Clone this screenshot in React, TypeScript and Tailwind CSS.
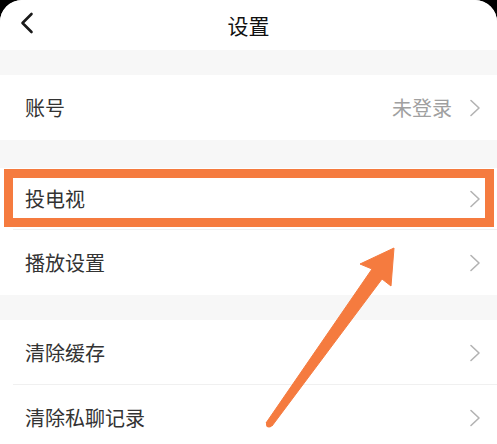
import React from "react";

const font = { fontFamily: '"Noto Sans CJK SC", "Noto Sans", sans-serif' };

function Chevron() {
  return (
    <svg width="12" height="18" viewBox="0 0 12 18" className="shrink-0">
      <polyline
        points="2,1.5 10,9 2,16.5"
        fill="none"
        stroke="#b3b3b3"
        strokeWidth="1.6"
        strokeLinecap="round"
        strokeLinejoin="round"
      />
    </svg>
  );
}

function Row({
  label,
  value,
  divider,
  short,
}: {
  label: string;
  value?: string;
  divider?: boolean;
  short?: boolean;
}) {
  return (
    <div
      className={
        "relative bg-white flex items-center pl-[25px] pr-[16px] " +
        (short ? "h-[62px]" : "h-[65px]")
      }
    >
      <span className="text-[20px] text-[#333333] flex-1 leading-none">{label}</span>
      {value && (
        <span className="text-[20px] text-[#a0a0a0] leading-none mr-[17px]">{value}</span>
      )}
      <Chevron />
      {divider && (
        <div className="absolute left-[13px] right-0 bottom-0 h-px bg-[#f0f0f0]" />
      )}
    </div>
  );
}

export default function App() {
  return (
    <div className="w-[497px] h-[444px] bg-black overflow-hidden relative" style={font}>
      <div className="h-full bg-[#f7f7f7] rounded-t-[22px] overflow-hidden">
        {/* header */}
        <div className="h-[50px] bg-white relative flex items-center justify-center">
          <svg width="14" height="22" viewBox="0 0 14 22" className="absolute left-[20px] top-[12px]">
            <polyline
              points="11.5,2 2.5,11 11.5,20"
              fill="none"
              stroke="#1a1a1a"
              strokeWidth="2.6"
              strokeLinecap="round"
              strokeLinejoin="round"
            />
          </svg>
          <span className="text-[21px] text-[#111111] leading-none">设置</span>
        </div>

        <div className="h-[25px]" />
        <Row label="账号" value="未登录" />

        <div className="h-[28px]" />
        <Row label="投电视" divider short />
        <Row label="播放设置" />

        <div className="h-[25px]" />
        <Row label="清除缓存" divider />
        <Row label="清除私聊记录" />
      </div>

      {/* annotation box */}
      <div className="absolute left-[4px] top-[169px] w-[490px] h-[58px] border-[9px] border-[#f57b3f]" />

      {/* annotation arrow */}
      <svg width="497" height="444" className="absolute left-0 top-0 pointer-events-none">
        <polygon
          points="394,248 391,286 382,279 272,426 266,423 372,269 360,264"
          fill="#f57b3f"
          stroke="#f57b3f"
          strokeWidth="1"
          strokeLinejoin="round"
        />
        <circle cx="269" cy="424.5" r="3" fill="#f57b3f" />
      </svg>
    </div>
  );
}
